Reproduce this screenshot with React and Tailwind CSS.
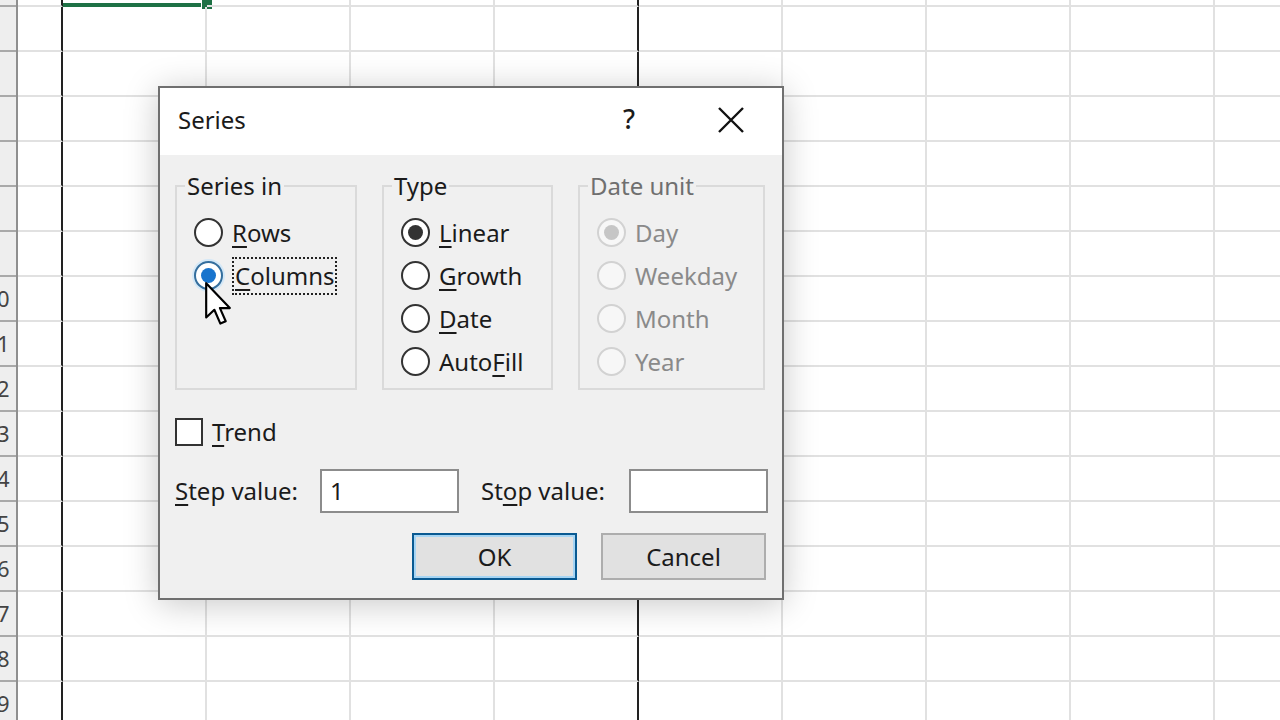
import React from 'react';

const rowHeights = [7, ...Array(16).fill(45)];
const colWidths = [45, 144, 144, 144, 144, 144, 144, 144, 144, 144];

function Sheet() {
  return (
    <div className="flex">
      <div className="w-[18px] shrink-0 border-r-2 border-[#8f8f8f] bg-[#eeeeee] overflow-hidden">
        {rowHeights.map((h, i) => (
          <div
            key={i}
            style={{ height: h }}
            className="relative border-b-2 border-[#a9a9a9] overflow-hidden"
          >
            {i + 3 >= 10 && (
              <div className="absolute left-[-22px] top-0 bottom-0 w-[38px] flex items-center justify-center text-[22px] text-[#444]">
                {i + 3}
              </div>
            )}
          </div>
        ))}
      </div>
      <div className="flex flex-col">
        {rowHeights.map((h, r) => (
          <div key={r} className="flex" style={{ height: h }}>
            {colWidths.map((w, c) => (
              <div
                key={c}
                style={{ width: w }}
                className={
                  'relative shrink-0 border-r-2 ' +
                  (c === 0 || c === 4 ? 'border-r-[#222] ' : 'border-r-[#e1e1e1] ') +
                  (r === 0 && c === 1 ? 'border-b-[4px] border-b-[#1e7145]' : 'border-b-2 border-b-[#e1e1e1]')
                }
              >
                {r === 0 && c === 1 && (
                  <div className="absolute right-[-8px] top-[-2px] w-[12px] h-[12px] bg-[#1e7145] border border-white" />
                )}
              </div>
            ))}
          </div>
        ))}
      </div>
    </div>
  );
}

function Key({ children }) {
  return <span className="underline underline-offset-[4px] decoration-[2px]">{children}</span>;
}

function Radio({ checked, disabled, focused, children }) {
  let circle = 'border-[#333] bg-white';
  let dot = 'bg-[#333]';
  if (disabled) {
    circle = 'border-[#d2d2d2] bg-[#f7f7f7]';
    dot = 'bg-[#c6c6c6]';
  }
  if (focused) {
    circle = 'border-[#356f9e] bg-white shadow-[0_0_0_2px_#d4e8f7]';
    dot = 'bg-[#1874cd]';
  }
  return (
    <div className="h-[43px] flex items-center gap-[9px]">
      <div className={'w-[29px] h-[29px] rounded-full border-[2.5px] flex items-center justify-center shrink-0 ' + circle}>
        {checked && <div className={'w-[15px] h-[15px] rounded-full ' + dot} />}
      </div>
      <span
        className={
          (disabled ? 'text-[#8a8a8a] ' : 'text-[#1b1b1b] ') +
          (focused ? 'border-2 border-dotted border-[#222] px-[1px] leading-[34px]' : '')
        }
      >
        {children}
      </span>
    </div>
  );
}

function Group({ title, width, disabled, children }) {
  return (
    <fieldset
      style={{ width }}
      className="h-[219px] border-2 border-[#dadada] pl-[17px] pt-[10px] shrink-0"
    >
      <legend className={'ml-[-9px] px-[2px] leading-[30px] ' + (disabled ? 'text-[#6f6f6f]' : 'text-[#1b1b1b]')}>
        {title}
      </legend>
      <div className="flex flex-col">{children}</div>
    </fieldset>
  );
}

export default function App() {
  return (
    <div className="relative w-[1280px] h-[720px] overflow-hidden bg-white font-['Noto_Sans',sans-serif]">
      <Sheet />

      <div className="absolute left-[158px] top-[86px] w-[626px] border-2 border-[#6f6f6f] shadow-[0_4px_32px_rgba(0,0,0,0.22)] text-[24px] text-[#1b1b1b]">
        <div className="h-[67px] bg-white flex items-center pl-[18px] pr-[38px] pb-[4px]">
          <span className="flex-1">Series</span>
          <span className="w-[26px] text-center mr-[76px] text-[27px] font-medium">?</span>
          <svg width="26" height="26" viewBox="0 0 26 26">
            <path d="M1 1 L25 25 M25 1 L1 25" stroke="#111" strokeWidth="2.4" fill="none" />
          </svg>
        </div>

        <div className="bg-[#f0f0f0] pt-[16px] pl-[15px] pr-[14px] pb-[18px]">
          <div className="flex gap-[25px]">
            <Group title="Series in" width={182}>
              <Radio><Key>R</Key>ows</Radio>
              <Radio checked focused><Key>C</Key>olumns</Radio>
            </Group>
            <Group title="Type" width={171}>
              <Radio checked><Key>L</Key>inear</Radio>
              <Radio><Key>G</Key>rowth</Radio>
              <Radio><Key>D</Key>ate</Radio>
              <Radio>Auto<Key>F</Key>ill</Radio>
            </Group>
            <Group title="Date unit" width={187} disabled>
              <Radio checked disabled>Day</Radio>
              <Radio disabled>Weekday</Radio>
              <Radio disabled>Month</Radio>
              <Radio disabled>Year</Radio>
            </Group>
          </div>

          <div className="mt-[28px] h-[28px] flex items-center gap-[9px]">
            <div className="w-[28px] h-[28px] border-2 border-[#333] bg-white" />
            <span><Key>T</Key>rend</span>
          </div>

          <div className="mt-[23px] h-[44px] flex items-center">
            <span className="w-[145px]"><Key>S</Key>tep value:</span>
            <div className="w-[139px] h-[44px] border-2 border-[#8c8c8c] bg-white flex items-center pl-[8px]">1</div>
            <span className="w-[148px] ml-[22px]">St<Key>o</Key>p value:</span>
            <div className="w-[139px] h-[44px] border-2 border-[#8c8c8c] bg-white" />
          </div>

          <div className="mt-[20px] flex justify-end gap-[24px] mr-[2px]">
            <button className="w-[165px] h-[47px] border-2 border-[#0a5a92] shadow-[inset_0_0_0_2px_#a6d5f4] bg-[#e1e1e1] text-[#1b1b1b]">
              OK
            </button>
            <button className="w-[165px] h-[47px] border-2 border-[#adadad] bg-[#e1e1e1] text-[#1b1b1b]">
              Cancel
            </button>
          </div>
        </div>
      </div>

      <svg className="absolute left-[204px] top-[281px]" width="28" height="46" viewBox="0 0 13 21.4">
        <path
          d="M1 1 L1 17 L4.8 13.4 L7.6 19.8 L10.1 18.7 L7.4 12.6 L12 12.6 Z"
          fill="#fff"
          stroke="#000"
          strokeWidth="1"
          strokeLinejoin="round"
        />
      </svg>
    </div>
  );
}
